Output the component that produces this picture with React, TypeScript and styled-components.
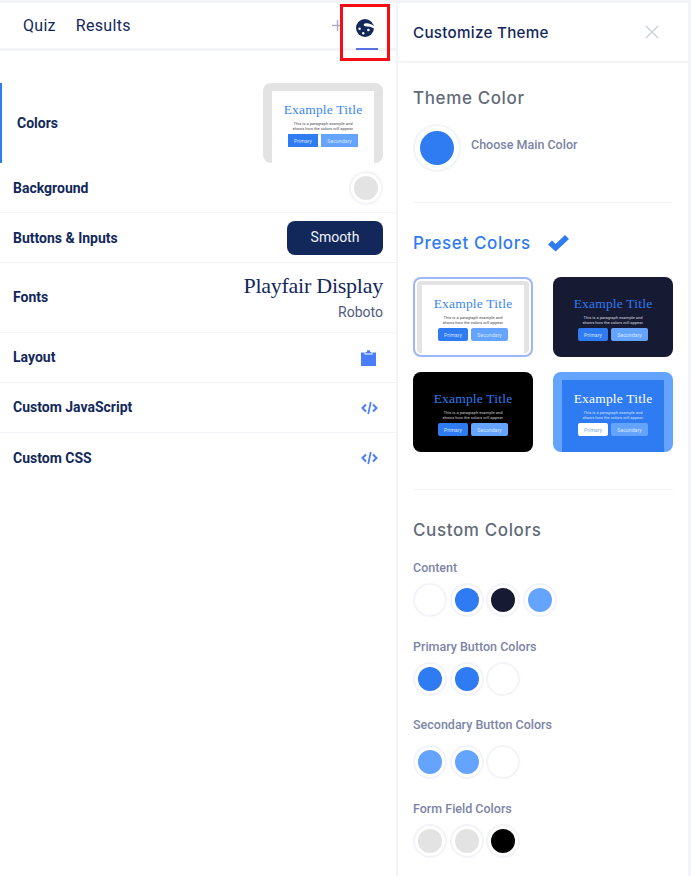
import React from "react";
import styled, { createGlobalStyle } from "styled-components";

const Global = createGlobalStyle`
  html, body { margin: 0; padding: 0; background: #fff; }
  body { font-family: Roboto, "Liberation Sans", sans-serif; }
  * { box-sizing: border-box; }
`;

const line = "#f3f4f9";
const navy = "#12285a";
const blue = "#2f7bf2";
const sky = "#64a4ff";
const ink = "#171a33";
const grey = "#e3e3e3";
const display = `"Inter", "Open Sans", sans-serif`;
const serif = `"Liberation Serif", "DejaVu Serif", serif`;

const Page = styled.div`
  display: flex;
  width: 691px;
  height: 876px;
  overflow: hidden;
  border-top: 3px solid ${line};
`;
const LeftPanel = styled.main`
  width: 396px;
  flex: none;
`;
const TabBar = styled.nav`
  position: relative;
  height: 48px;
  display: flex;
  align-items: center;
  padding: 0 12px 0 23px;
  border-bottom: 3px solid ${line};
`;
const Tab = styled.span`
  font-size: 16px;
  font-weight: 400;
  letter-spacing: 0.3px;
  color: ${navy};
  margin-right: 20px;
`;
const PlusGlyph = styled.svg`
  margin-left: auto;
  width: 11px;
  height: 11px;
  margin-bottom: 1px;
`;
const PaletteTab = styled.div`
  width: 22px;
  height: 45px;
  margin: 0 6px 0 13px;
  display: flex;
  align-items: center;
  justify-content: flex-start;
  padding-top: 3px;
  border-bottom: 2px solid #5a72e0;
  align-self: flex-start;
  transform: translateY(2px);
`;
const RedMark = styled.div`
  position: absolute;
  left: 340px;
  top: 1px;
  width: 50px;
  height: 57px;
  border: 3px solid #f40d14;
`;
const List = styled.div`
  padding-top: 32px;
`;
const ActiveRow = styled.div`
  height: 80px;
  display: flex;
  align-items: center;
  justify-content: space-between;
  padding: 0 13px 0 15px;
  border-left: 2px solid ${blue};
`;
const Row = styled.div<{ $h?: number; $last?: boolean }>`
  height: ${(p) => p.$h ?? 50}px;
  display: flex;
  align-items: center;
  justify-content: space-between;
  padding: 0 13px;
  border-bottom: ${(p) => (p.$last ? "none" : "1px solid #f1f2f6")};
`;
const RowLabel = styled.span<{ $lift?: boolean }>`
  font-size: 14px;
  font-weight: 700;
  color: ${navy};
  padding-bottom: ${(p) => (p.$lift ? 2 : 0)}px;
`;
const SmoothButton = styled.div`
  width: 96px;
  height: 34px;
  border-radius: 8px;
  background: ${navy};
  color: #f1f3f8;
  font-size: 14px;
  display: flex;
  align-items: center;
  justify-content: center;
  padding-bottom: 1px;
`;
const FontStack = styled.div`
  display: flex;
  flex-direction: column;
  align-items: flex-end;
`;
const HeadingFont = styled.span`
  font-family: ${serif};
  font-size: 22px;
  line-height: 28px;
  letter-spacing: -0.25px;
  color: ${navy};
  margin-top: -1px;
`;
const BodyFont = styled.span`
  font-size: 14px;
  line-height: 22px;
  color: #4f5b84;
  margin-top: 1px;
`;
const RowIcon = styled.svg<{ $right: number }>`
  display: block;
  margin-right: ${(p) => p.$right}px;
`;
const RightPanel = styled.aside`
  width: 295px;
  flex: none;
  border-left: 2px solid ${line};
  border-right: 3px solid ${line};
`;
const PanelHeader = styled.header`
  height: 60px;
  padding: 0 15px;
  display: flex;
  align-items: center;
  justify-content: space-between;
  border-bottom: 2px solid ${line};
`;
const PanelTitle = styled.h1`
  margin: 0;
  font-family: ${display};
  font-weight: 500;
  font-size: 15.2px;
  letter-spacing: 0.28px;
  color: ${navy};
`;
const CloseIcon = styled.svg`
  width: 14px;
  height: 14px;
  margin-right: 14px;
`;
const PanelBody = styled.div`
  padding: 0 15px;
`;
const Section = styled.section<{ $top: number; $bottom: number; $end?: boolean }>`
  padding: ${(p) => p.$top}px 0 ${(p) => p.$bottom}px;
  border-bottom: ${(p) => (p.$end ? "none" : `1px solid ${line}`)};
`;
const Heading = styled.h2<{ $accent?: boolean }>`
  margin: 0;
  display: flex;
  align-items: center;
  gap: 17px;
  height: 24px;
  font-family: ${display};
  font-weight: 500;
  font-size: 17px;
  letter-spacing: 0.62px;
  color: ${(p) => (p.$accent ? blue : "#626b78")};
`;
const MainColor = styled.div`
  display: flex;
  gap: 10px;
  margin-top: 14px;
`;
const MainLabel = styled.span`
  font-size: 12.5px;
  font-weight: 500;
  line-height: 16px;
  margin-top: 13px;
  color: #7b85a6;
`;
const Ring = styled.div<{ $size?: number }>`
  width: ${(p) => p.$size ?? 34}px;
  height: ${(p) => p.$size ?? 34}px;
  flex: none;
  border-radius: 50%;
  border: 2px solid ${line};
  display: flex;
  align-items: center;
  justify-content: center;
  background: #fff;
`;
const Dot = styled.div<{ $color: string; $size?: number }>`
  width: ${(p) => p.$size ?? 24}px;
  height: ${(p) => p.$size ?? 24}px;
  border-radius: 50%;
  background: ${(p) => p.$color};
`;
const PresetGrid = styled.div`
  display: grid;
  grid-template-columns: 120px 120px;
  grid-auto-rows: 80px;
  column-gap: 20px;
  row-gap: 15px;
  margin-top: 22px;
`;
const Card = styled.div<{ $outer: string; $selected?: boolean }>`
  width: 120px;
  height: 80px;
  padding: 8px 9px ${(p) => (p.$selected ? 4 : 0)}px;
  border-radius: 8px;
  overflow: hidden;
  display: flex;
  background: ${(p) => p.$outer};
  box-shadow: ${(p) =>
    p.$selected ? "inset 0 0 0 2px #9ab8fb, inset 0 0 0 4px #fff" : "none"};
`;
const CardInner = styled.div<{ $bg: string }>`
  flex: 1;
  background: ${(p) => p.$bg};
  display: flex;
  flex-direction: column;
  align-items: center;
  padding-top: 10px;
`;
const CardTitle = styled.div<{ $color: string }>`
  font-family: ${serif};
  font-size: 13.5px;
  line-height: 18px;
  letter-spacing: 0.2px;
  white-space: nowrap;
  color: ${(p) => p.$color};
`;
const CardText = styled.div<{ $color: string }>`
  font-size: 4.1px;
  line-height: 5px;
  width: 70px;
  margin: 2px -10px 0;
  white-space: nowrap;
  text-align: center;
  color: ${(p) => p.$color};
`;
const CardButtons = styled.div`
  display: flex;
  gap: 3px;
  margin-top: 3px;
`;
const CardButton = styled.div<{ $bg: string; $w: number; $square?: boolean; $fg: string }>`
  width: ${(p) => p.$w}px;
  height: 13px;
  border-radius: ${(p) => (p.$square ? 0 : 2)}px;
  background: ${(p) => p.$bg};
  color: ${(p) => p.$fg};
  font-size: 5.2px;
  display: flex;
  align-items: center;
  justify-content: center;
`;
const FieldLabel = styled.div<{ $top: number }>`
  margin-top: ${(p) => p.$top}px;
  font-size: 12.5px;
  font-weight: 500;
  line-height: 16px;
  color: #7b85a6;
`;
const Swatches = styled.div<{ $top: number }>`
  display: flex;
  gap: 2.67px;
  margin-top: ${(p) => p.$top}px;
`;

type Theme = {
  outer: string; inner: string; title: string; text: string;
  primary: string; primaryFg: string; selected?: boolean;
};

const ThemeCard = ({ t, square }: { t: Theme; square?: boolean }) => (
  <Card $outer={t.outer} $selected={t.selected}>
    <CardInner $bg={t.inner}>
      <CardTitle $color={t.title}>Example Title</CardTitle>
      <CardText $color={t.text}>
        This is a paragraph example and<br />shows how the colors will appear.
      </CardText>
      <CardButtons>
        <CardButton $bg={t.primary} $fg={t.primaryFg} $w={30} $square={square}>Primary</CardButton>
        <CardButton $bg={sky} $fg="#d6e6ff" $w={37} $square={square}>Secondary</CardButton>
      </CardButtons>
    </CardInner>
  </Card>
);

const light: Theme = { outer: grey, inner: "#fff", title: "#3b86f5", text: "#4a4a55", primary: blue, primaryFg: "#cfe0ff" };
const presets: Theme[] = [
  { ...light, selected: true },
  { outer: ink, inner: ink, title: blue, text: "#d5d6de", primary: blue, primaryFg: "#cfe0ff" },
  { outer: "#000", inner: "#000", title: blue, text: "#c9c9c9", primary: blue, primaryFg: "#cfe0ff" },
  { outer: sky, inner: blue, title: "#fff", text: "#cfe0ff", primary: "#fff", primaryFg: "#7ea9ee" },
];

const PaletteIcon = () => (
  <svg width="18" height="18" viewBox="0 0 18 18">
    <circle cx="9" cy="9" r="9" fill={navy} />
    <path fill="#fff" d="M8.4 4.8c2.4-1 6.2-.4 9.8 2.4v2.4c-2.4-1.7-6-2.2-9-2.4-1.4-.1-2-1.8-.8-2.4z" />
    <circle cx="3.6" cy="9.8" r="1.2" fill="#fff" />
    <circle cx="7.2" cy="14.2" r="1.2" fill="#fff" />
    <circle cx="12.4" cy="11" r="1.3" fill="#fff" />
  </svg>
);

const CodeIcon = () => (
  <RowIcon $right={5} width="17" height="14" viewBox="0 0 17 14" fill="none" stroke="#4a7dfb" strokeWidth="2">
    <path d="M5 3.5 1.5 7 5 10.5M12 3.5 15.5 7 12 10.5" />
    <path d="M9.8 1 7.2 13" strokeWidth="1.7" />
  </RowIcon>
);

const ClipboardIcon = () => (
  <RowIcon $right={7} width="15" height="16" viewBox="0 0 15 16">
    <path fill="#4a7dfb" d="M0 2.5h3.5V4.5h8V2.5H15V16H0z" />
    <path fill="#4a7dfb" d="M6 .3h3v1.6h1.5v1.6h-6V1.9H6z" />
  </RowIcon>
);

const CheckIcon = () => (
  <svg width="21" height="17" viewBox="0 0 21 17">
    <path fill={blue} d="M0 9.5 4 5.5 7.6 9 17 0 21 4 7.6 16.6z" />
  </svg>
);

const Swatch = ({ color }: { color: string }) => (
  <Ring><Dot $color={color} /></Ring>
);

const groups = [
  { label: "Content", top: 18, gap: 7, colors: ["#fff", blue, ink, sky] },
  { label: "Primary Button Colors", top: 22, gap: 7, colors: [blue, blue, "#fff"] },
  { label: "Secondary Button Colors", top: 21, gap: 12, colors: [sky, sky, "#fff"] },
  { label: "Form Field Colors", top: 22, gap: 7, colors: [grey, grey, "#000"] },
];

export default function App() {
  return (
    <Page>
      <Global />
      <LeftPanel>
        <TabBar>
          <Tab>Quiz</Tab>
          <Tab>Results</Tab>
          <PlusGlyph viewBox="0 0 11 11" stroke="#a9b0c4" strokeWidth="1.4">
            <path d="M5.5 0v11M0 5.5h11" />
          </PlusGlyph>
          <PaletteTab><PaletteIcon /></PaletteTab>
          <RedMark />
        </TabBar>
        <List>
          <ActiveRow>
            <RowLabel>Colors</RowLabel>
            <ThemeCard t={light} square />
          </ActiveRow>
          <Row>
            <RowLabel>Background</RowLabel>
            <Ring><Dot $color={grey} /></Ring>
          </Row>
          <Row>
            <RowLabel>Buttons &amp; Inputs</RowLabel>
            <SmoothButton>Smooth</SmoothButton>
          </Row>
          <Row $h={70}>
            <RowLabel $lift>Fonts</RowLabel>
            <FontStack>
              <HeadingFont>Playfair Display</HeadingFont>
              <BodyFont>Roboto</BodyFont>
            </FontStack>
          </Row>
          <Row>
            <RowLabel $lift>Layout</RowLabel>
            <ClipboardIcon />
          </Row>
          <Row>
            <RowLabel $lift>Custom JavaScript</RowLabel>
            <CodeIcon />
          </Row>
          <Row $last>
            <RowLabel>Custom CSS</RowLabel>
            <CodeIcon />
          </Row>
        </List>
      </LeftPanel>
      <RightPanel>
        <PanelHeader>
          <PanelTitle>Customize Theme</PanelTitle>
          <CloseIcon viewBox="0 0 14 14" stroke="#c9cedd" strokeWidth="1.3">
            <path d="M1 1 13 13M13 1 1 13" />
          </CloseIcon>
        </PanelHeader>
        <PanelBody>
          <Section $top={23} $bottom={30}>
            <Heading>Theme Color</Heading>
            <MainColor>
              <Ring $size={48}><Dot $color={blue} $size={34} /></Ring>
              <MainLabel>Choose Main Color</MainLabel>
            </MainColor>
          </Section>
          <Section $top={28} $bottom={37}>
            <Heading $accent>Preset Colors <CheckIcon /></Heading>
            <PresetGrid>
              {presets.map((t, i) => <ThemeCard key={i} t={t} />)}
            </PresetGrid>
          </Section>
          <Section $top={28} $bottom={0} $end>
            <Heading>Custom Colors</Heading>
            {groups.map((g) => (
              <div key={g.label}>
                <FieldLabel $top={g.top}>{g.label}</FieldLabel>
                <Swatches $top={g.gap}>
                  {g.colors.map((c, i) => <Swatch key={i} color={c} />)}
                </Swatches>
              </div>
            ))}
          </Section>
        </PanelBody>
      </RightPanel>
    </Page>
  );
}
